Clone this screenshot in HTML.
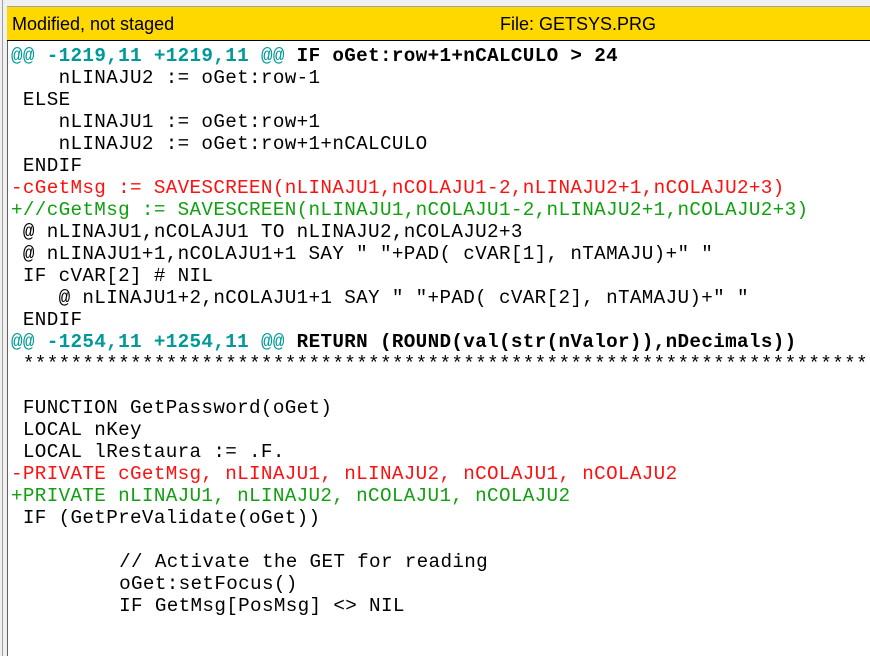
<!DOCTYPE html>
<html><head><meta charset="utf-8"><style>
html,body{margin:0;padding:0;width:870px;height:656px;overflow:hidden;background:#f0f0f0;}
.lstrip{position:absolute;left:2px;top:0;width:1px;height:656px;background:#a0a0a0;}
.topline{position:absolute;left:7px;top:6px;width:863px;height:1px;background:#a0a0a0;}
.hdr{position:absolute;left:7px;top:7px;width:863px;height:33px;background:#ffd800;font-family:"Liberation Sans",sans-serif;font-size:18px;color:#000;}
.hdr .l{position:absolute;left:5px;top:7px;}
.hdr .r{position:absolute;left:493px;top:7px;}
.hline{position:absolute;left:7px;top:40px;width:863px;height:1px;background:#000;}
.panel{position:absolute;left:7px;top:41px;width:863px;height:615px;background:#fff;border-left:1px solid #606060;overflow:hidden;}
pre{position:absolute;left:3px;top:4px;margin:0;font-family:"Liberation Mono","Courier New",monospace;font-size:19.27px;letter-spacing:0.34px;line-height:22px;color:#000;white-space:pre;}
.t{color:#009999;}
.tb{color:#009999;font-weight:bold;}
.b{font-weight:bold;}
.red{color:#ff1010;}
.grn{color:#10a010;}
</style></head><body>
<div class="lstrip"></div>
<div class="topline"></div>
<div class="hdr"><span class="l">Modified, not staged</span><span class="r">File:  GETSYS.PRG</span></div>
<div class="hline"></div>
<div class="panel"><pre><span class="t">@@</span> <span class="tb">-1219,11 +1219,11</span> <span class="t">@@</span> <span class="b">IF oGet:row+1+nCALCULO &gt; 24</span>
    nLINAJU2 := oGet:row-1
 ELSE
    nLINAJU1 := oGet:row+1
    nLINAJU2 := oGet:row+1+nCALCULO
 ENDIF
<span class="red">-cGetMsg := SAVESCREEN(nLINAJU1,nCOLAJU1-2,nLINAJU2+1,nCOLAJU2+3)</span>
<span class="grn">+//cGetMsg := SAVESCREEN(nLINAJU1,nCOLAJU1-2,nLINAJU2+1,nCOLAJU2+3)</span>
 @ nLINAJU1,nCOLAJU1 TO nLINAJU2,nCOLAJU2+3
 @ nLINAJU1+1,nCOLAJU1+1 SAY " "+PAD( cVAR[1], nTAMAJU)+" "
 IF cVAR[2] # NIL
    @ nLINAJU1+2,nCOLAJU1+1 SAY " "+PAD( cVAR[2], nTAMAJU)+" "
 ENDIF
<span class="t">@@</span> <span class="tb">-1254,11 +1254,11</span> <span class="t">@@</span> <span class="b">RETURN (ROUND(val(str(nValor)),nDecimals))</span>
 ****************************************************************************

 FUNCTION GetPassword(oGet)
 LOCAL nKey
 LOCAL lRestaura := .F.
<span class="red">-PRIVATE cGetMsg, nLINAJU1, nLINAJU2, nCOLAJU1, nCOLAJU2</span>
<span class="grn">+PRIVATE nLINAJU1, nLINAJU2, nCOLAJU1, nCOLAJU2</span>
 IF (GetPreValidate(oGet))

         <span style="margin-left:1px">// Activate the GET for reading</span>
         <span style="margin-left:1px">oGet:setFocus()</span>
         <span style="margin-left:1px">IF GetMsg[PosMsg] &lt;&gt; NIL</span>
</pre></div>
</body></html>
